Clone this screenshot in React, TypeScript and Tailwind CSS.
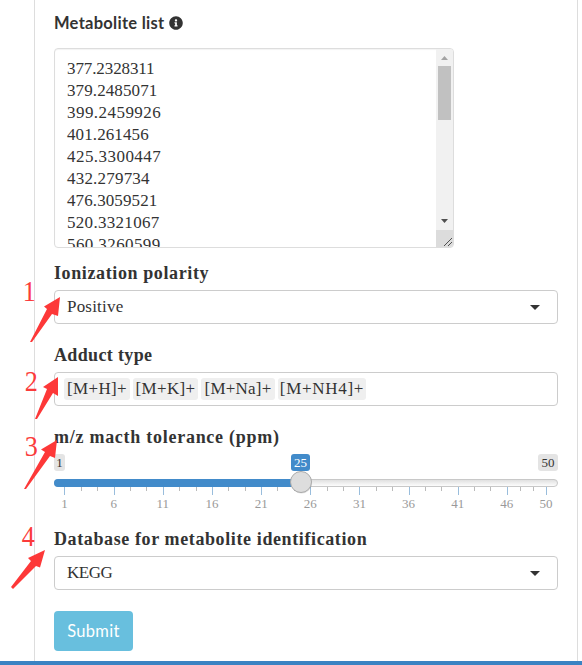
import React from 'react';
import { FaInfoCircle } from 'react-icons/fa';

const masses = [
  { value: '377.2328311', spacing: 'tracking-[-0.1px]' },
  { value: '379.2485071', spacing: 'tracking-[0.1px]' },
  { value: '399.2459926', spacing: 'tracking-[0.45px]' },
  { value: '401.261456', spacing: 'tracking-[0.1px]' },
  { value: '425.3300447', spacing: 'tracking-[0.45px]' },
  { value: '432.279734', spacing: 'tracking-[0.2px]' },
  { value: '476.3059521', spacing: 'tracking-[0.1px]' },
  { value: '520.3321067', spacing: 'tracking-[0.3px]' },
  { value: '560.3260599', spacing: 'tracking-[0.4px]' },
];

const majorTicks = [10, 60, 109, 158, 207, 256, 305, 355, 404, 453, 492];
const minorTicks = [27, 43, 76, 92, 125, 142, 174, 191, 223, 240, 273, 289, 322, 338, 371, 387, 420, 436, 466, 479];
const tickLabels = ['1', '6', '11', '16', '21', '26', '31', '36', '41', '46'];

function Label({ children, className }: { children: React.ReactNode; className: string }) {
  return <div className={`h-[22px] leading-[21px] text-[18px] font-bold whitespace-nowrap ${className}`}>{children}</div>;
}

function Caret() {
  return (
    <svg width="10" height="5" viewBox="0 0 10 5" fill="#333">
      <path d="M0 0H10L5 5Z" />
    </svg>
  );
}

function Select({ children, className }: { children: React.ReactNode; className: string }) {
  return (
    <div className="flex h-[34px] items-center justify-between rounded-[4px] border border-[#ccc] pl-3 pr-[17px] text-[17px]">
      <span className={className}>{children}</span>
      <Caret />
    </div>
  );
}

function Tag({ children, className }: { children: React.ReactNode; className: string }) {
  return (
    <span className={`flex h-[22px] items-center justify-center rounded-[3px] bg-[#efefef] text-[17px] whitespace-nowrap ${className}`}>
      {children}
    </span>
  );
}

function Annotation({ digit, digitClass, points }: { digit: string; digitClass: string; points: string }) {
  return (
    <>
      <span className={`absolute scale-x-90 font-['Liberation_Serif',serif] text-[29px] leading-[30px] text-[#fb3b3b] ${digitClass}`}>{digit}</span>
      <svg className="absolute left-0 top-0" width="582" height="665" fill="#fd3838">
        <polygon points={points} />
      </svg>
    </>
  );
}

export default function App() {
  return (
    <div className="relative flex h-[665px] w-[582px] flex-col overflow-hidden bg-white font-['Liberation_Serif',serif] text-[#333]">
      <div className="ml-[34px] flex h-[661px] w-[544px] flex-col border-x border-[#ddd] pl-[19px] pr-[19px]">
        <div className="mt-[12px] flex h-[22px] items-center gap-[4px] whitespace-nowrap font-['Lato',sans-serif] text-[16.5px] font-bold">
          <span className="tracking-[0.28px]">Metabolite list</span>
          <FaInfoCircle size={14} />
        </div>

        <div className="mt-[14px] flex h-[200px] w-[400px] overflow-hidden rounded-[4px] border border-[#ddd] shadow-[inset_0_1px_1px_rgba(0,0,0,0.05)]">
          <div className="flex-1 pl-3 pt-[9px] text-[17px] leading-[22px]">
            {masses.map(({ value, spacing }) => (
              <div key={value} className={spacing}>{value}</div>
            ))}
          </div>
          <div className="flex w-[17px] flex-col">
            <div className="flex h-[181px] flex-col items-center bg-[#f1f1f1]">
              <svg width="17" height="17" viewBox="0 0 17 17" fill="#a3a3a3">
                <path d="M5 11L8.500 7L12 11Z" />
              </svg>
              <div className="h-[54px] w-[13px] bg-[#c1c1c1]" />
              <svg className="mt-auto" width="17" height="17" viewBox="0 0 17 17" fill="#505050">
                <path d="M5 6L8.500 10L12 6Z" />
              </svg>
            </div>
            <svg className="bg-[#dcdcdc]" width="17" height="17" viewBox="0 0 17 17" stroke="#505050" strokeWidth="1">
              <path d="M8 16L16 8M12 16L16 12" />
            </svg>
          </div>
        </div>

        <Label className="mt-[15px] tracking-[0.61px]">Ionization polarity</Label>
        <div className="h-[5px]" />
        <Select className="tracking-[0.2px]">Positive</Select>

        <Label className="mt-[21px] tracking-[0.35px]">Adduct type</Label>
        <div className="h-[5px]" />
        <div className="flex h-[34px] items-center gap-[3px] rounded-[4px] border border-[#ccc] pl-[9px]">
          <Tag className="w-[66px] tracking-[0.35px]">[M+H]+</Tag>
          <Tag className="w-[65px] tracking-[0.35px]">[M+K]+</Tag>
          <Tag className="w-[74px] tracking-[0.2px]">[M+Na]+</Tag>
          <Tag className="w-[88px] tracking-[0.7px]">[M+NH4]+</Tag>
        </div>

        <Label className="mt-[21px] tracking-[0.73px]">m/z macth tolerance (ppm)</Label>
        <div className="mt-[5px] flex h-[17px] items-center text-[13px] leading-[17px]">
          <span className="h-[17px] w-[11px] rounded-[3px] bg-[#e4e4e4] text-center">1</span>
          <span className="ml-[226px] h-[17px] w-[19px] rounded-[3px] bg-[#428bca] text-center text-white">25</span>
          <span className="ml-auto h-[17px] w-[20px] rounded-[3px] bg-[#e4e4e4] text-center">50</span>
        </div>
        <svg className="shrink-0 overflow-visible" width="504" height="25" viewBox="0 0 504 25">
          <defs>
            <linearGradient id="rail" x1="0" y1="0" x2="0" y2="1">
              <stop offset="0" stopColor="#dedede" />
              <stop offset="1" stopColor="#fff" />
            </linearGradient>
          </defs>
          <rect x="0.500" y="8.500" width="503" height="7" rx="3.500" fill="url(#rail)" stroke="#c8c8c8" />
          <path d="M4 8H247V16H4A4 4 0 0 1 4 8Z" fill="#428bca" />
          {minorTicks.map((x) => (
            <rect key={x} x={x} y="16" width="1" height="4" fill="#bbb" />
          ))}
          {majorTicks.map((x) => (
            <rect key={x} x={x} y="16" width="1" height="8" fill="#99bddc" />
          ))}
          <circle cx="247.500" cy="12" r="10.500" fill="#000" opacity="0.12" />
          <circle cx="247" cy="11" r="10.500" fill="#ddd" stroke="#aaa" />
        </svg>
        <div className="-ml-[14px] mt-px flex h-[14px] w-[520px] text-[13px] leading-[14px] text-[#999]">
          {tickLabels.map((t) => (
            <span key={t} className="w-[49.15px] shrink-0 text-center">{t}</span>
          ))}
          <span className="w-[29px] shrink-0 text-center">50</span>
        </div>

        <Label className="mt-[18px] tracking-[0.61px]">Database for metabolite identification</Label>
        <div className="h-[5px]" />
        <Select className="tracking-[-0.5px]">KEGG</Select>

        <button className="mt-[21px] h-[40px] w-[79px] rounded-[4px] bg-[#68bfde] font-['Lato',sans-serif] text-[16.5px] tracking-[0.3px] text-white">
          Submit
        </button>
      </div>
      <div className="h-1 bg-[#3a83c3]" />

      <Annotation digit="1" digitClass="left-[22px] top-[276px]" points="60,297 44,306.500 47,309 30,342 32,342 52,314 58,316" />
      <Annotation digit="2" digitClass="left-[24px] top-[366px]" points="58,377 43,387 47,389 35,419 37,419 53,393 58,396" />
      <Annotation digit="3" digitClass="left-[24px] top-[431px]" points="57,440 41,449.500 45,452 24,489 26,489 50,456 55,458" />
      <Annotation digit="4" digitClass="left-[21px] top-[521px]" points="45,550 28,558 31,561 11,587 13,589 36,566 40,567.500" />
    </div>
  );
}
